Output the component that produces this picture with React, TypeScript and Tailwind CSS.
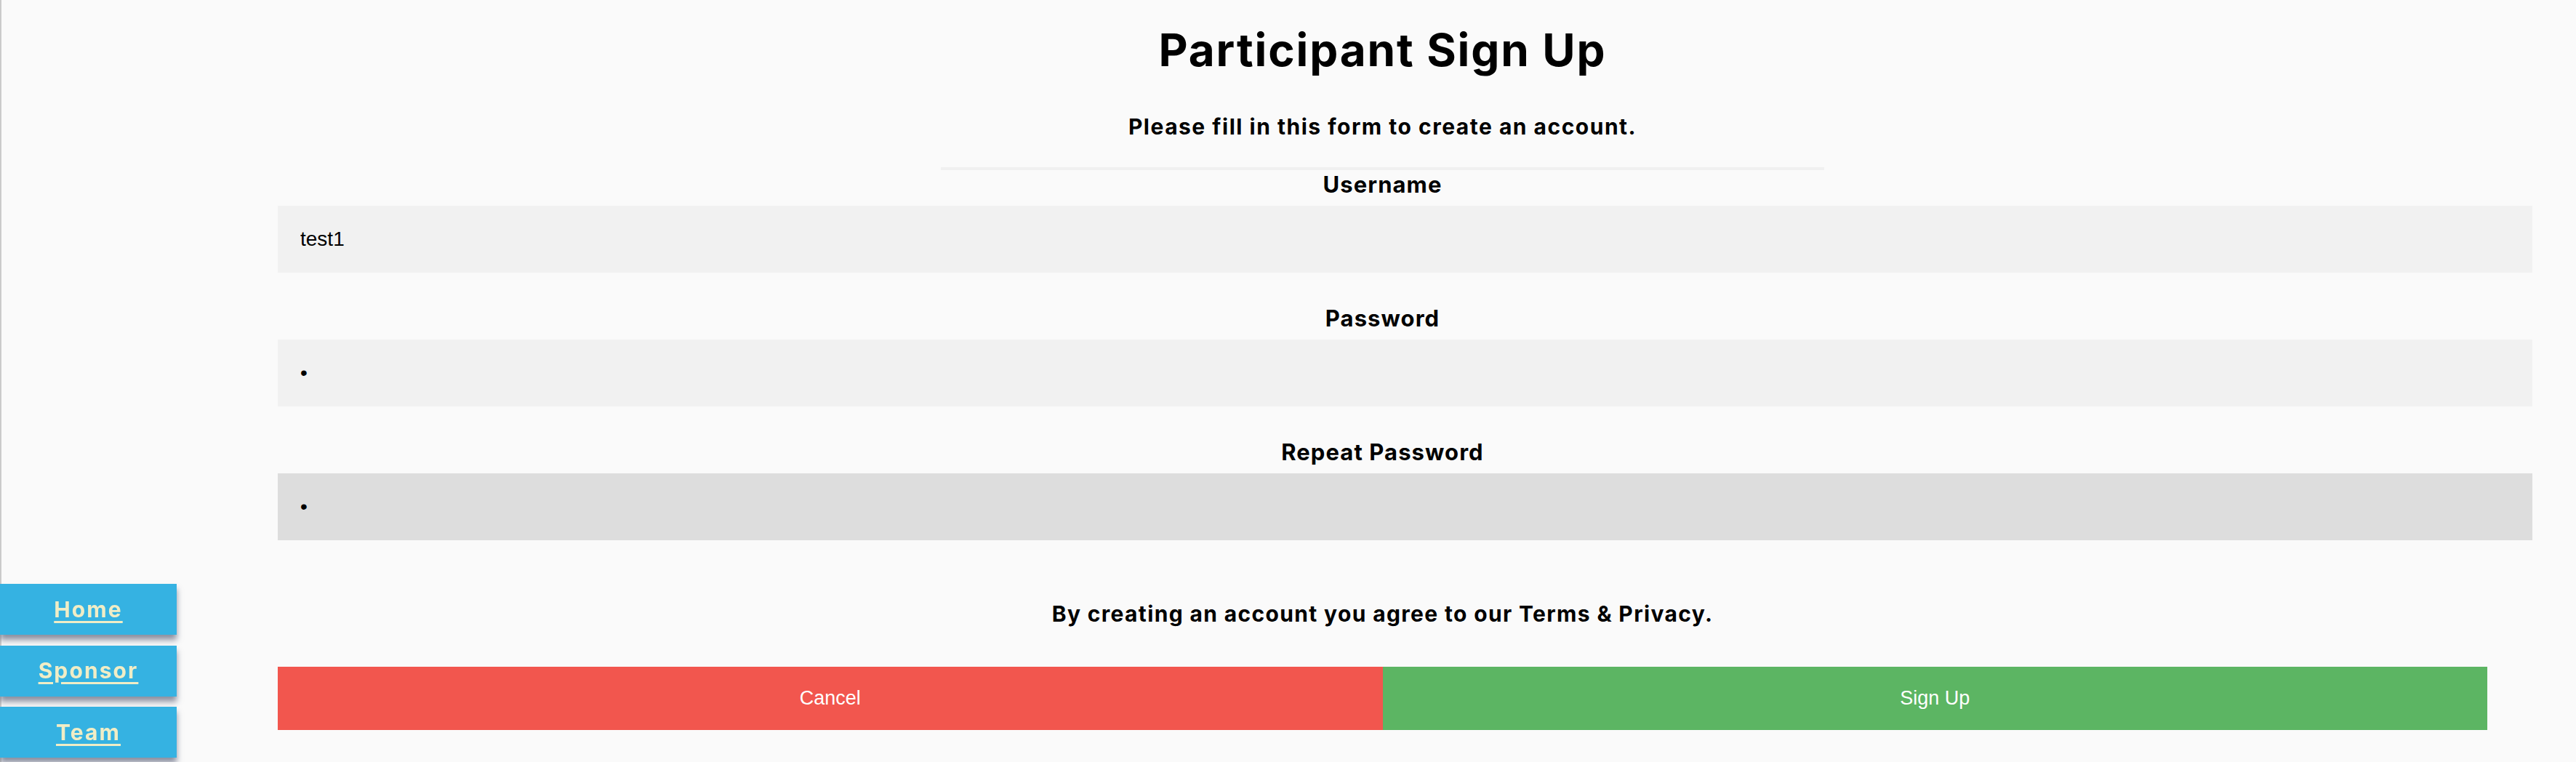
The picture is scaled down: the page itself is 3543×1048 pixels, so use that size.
import React from "react"

function SideNav() {
  const links = ["Home", "Sponsor", "Team"]
  return (
    <div className="fixed bottom-[6px] left-0 flex flex-col gap-[14.5px]">
      {links.map((l) => (
        <a
          key={l}
          href="#"
          className="flex h-[70px] w-[243px] items-center justify-center bg-[#35b2e2] text-[30px] font-bold tracking-[0.07em] text-[#f0edc6] underline decoration-[3px] underline-offset-[5px] shadow-[0_7px_8px_rgba(45,55,85,0.55)]"
        >
          {l}
        </a>
      ))}
    </div>
  )
}

function Field({ label, type, value, focused }: { label: string; type: string; value: string; focused?: boolean }) {
  return (
    <>
      <label className="block h-[31px] text-[31px] font-bold leading-[31px] tracking-[0.035em] text-black">{label}</label>
      <input
        type={type}
        defaultValue={value}
        autoFocus={focused}
        className={
          "mt-[14px] box-content block h-[92px] w-full px-[31px] py-0 text-left text-[28px] text-black outline-none [font-family:'Liberation_Sans',Arial,sans-serif] " +
          (focused ? "bg-[#dddddd]" : "bg-[#f1f1f1]")
        }
      />
    </>
  )
}

export default function App() {
  return (
    <div className="relative h-[1048px] w-full overflow-hidden border-l-2 border-[#cbcbcb] bg-[#fafafa] [font-family:Inter,'Noto_Sans',sans-serif]">
      <div className="ml-[380px] w-[3039px] pt-[38px] text-center">
        <h1 className="h-[62px] text-[62px] font-bold leading-[62px] tracking-[0.03em] text-black">Participant Sign Up</h1>
        <p className="mt-[59px] h-[30px] text-[30px] font-bold leading-[30px] tracking-[0.05em] text-black">
          Please fill in this form to create an account.
        </p>
        <div className="mx-auto mt-[41px] h-[4px] w-[40%] bg-[#f0f0f0]" />
        <div className="mt-[4px]">
          <Field label="Username" type="text" value="test1" />
        </div>
        <div className="mt-[47px]">
          <Field label="Password" type="password" value="a" />
        </div>
        <div className="mt-[47px]">
          <Field label="Repeat Password" type="password" value="a" focused />
        </div>
        <p className="mt-[86px] h-[30px] text-[30px] font-bold leading-[30px] tracking-[0.045em] text-black">
          By creating an account you agree to our Terms &amp; Privacy.
        </p>
        <div className="mt-[58px] flex h-[87px] [font-family:'Liberation_Sans',Arial,sans-serif]">
          <button className="h-full w-1/2 bg-[#f2564e] text-[27px] text-white">Cancel</button>
          <button className="h-full w-1/2 bg-[#5cb563] text-[27px] text-white">Sign Up</button>
        </div>
      </div>
      <SideNav />
    </div>
  )
}
